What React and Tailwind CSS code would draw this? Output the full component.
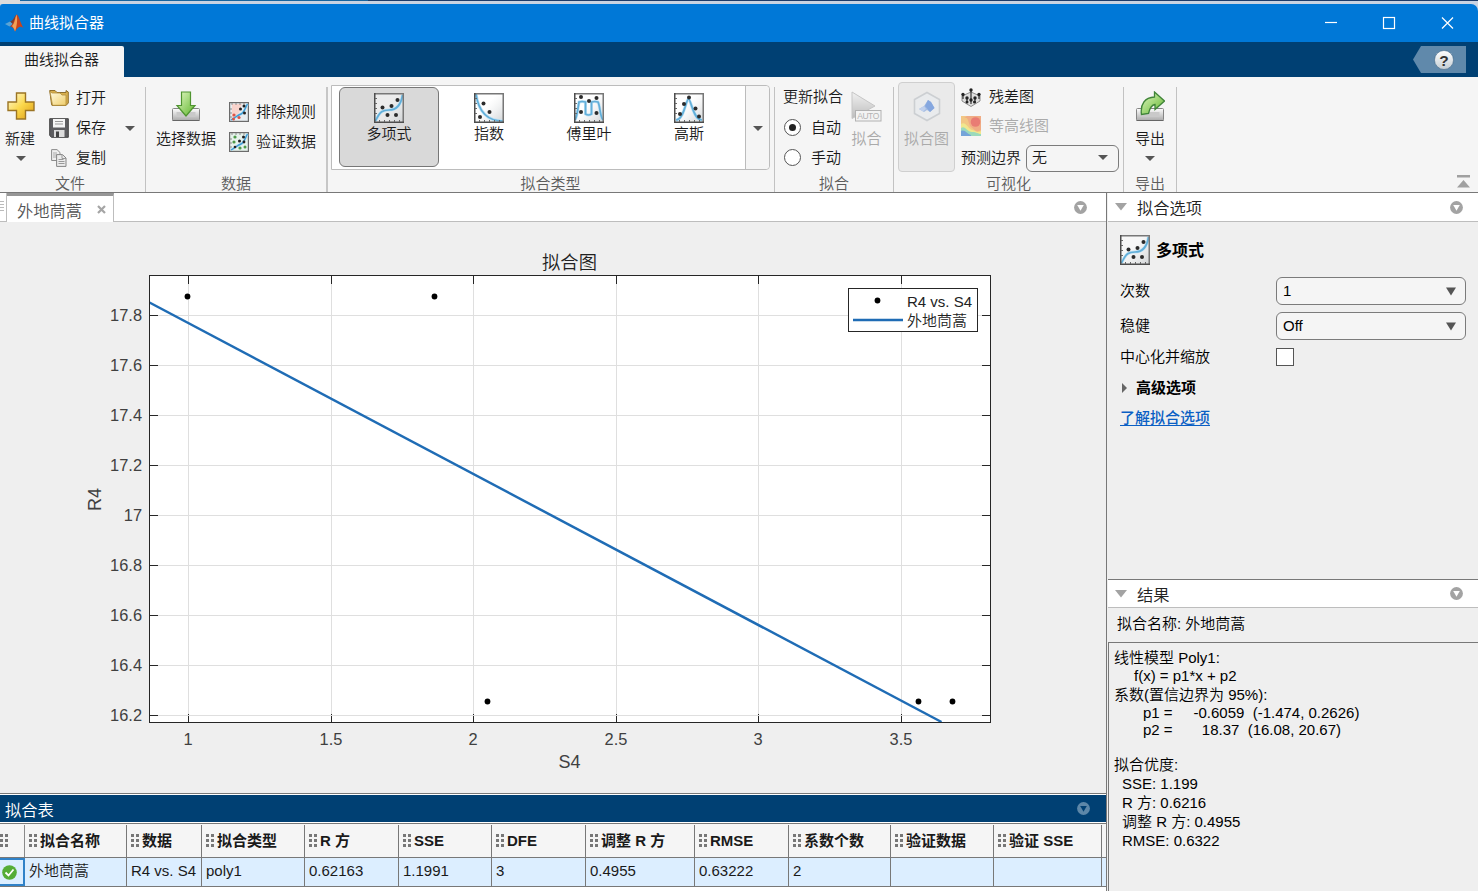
import React from "react";

const Caret = ({ className = "" }) => (
  <svg className={className} width="10" height="5" viewBox="0 0 10 5"><path d="M0 0H10L5 5Z" fill="#555" /></svg>
);

const Triangle = () => (
  <svg width="12" height="8" viewBox="0 0 12 8"><path d="M0 0H12L6 7.5Z" fill="#a3a3a3" /></svg>
);

const PanelMenu = ({ ring = "#a3a3a3", fill = "#fff" }) => (
  <svg width="13" height="13" viewBox="0 0 13 13">
    <circle cx="6.5" cy="6.5" r="6.4" fill={ring} />
    <path d="M3.2 4H9.8L6.5 9.8Z" fill={fill} />
  </svg>
);

const curves = {
  poly: "M1.5 28C6 18 9 17 15 17C22 17 27 12 28.5 2",
  exp: "M2 1C4 15 10 28 29 28",
  fourier: "M1 27C3 24 3.5 18 5 9Q8 8 11.500 9V21Q14.500 23 17.500 21V9Q21 8 24 9C26 12 26 24 29 27",
  gauss: "M2 27C10 27 12 6 14.5 6S19 27 28 27",
};
const points = {
  poly: [[8.5, 14.5], [17.5, 13], [23.5, 7], [13.5, 22], [22, 22]],
  exp: [[9.500, 10.5], [15.5, 19], [6, 24]],
  fourier: [[7, 4], [15, 8], [22.5, 5], [7, 19], [22.5, 20]],
  gauss: [[15, 4.500], [10, 11], [21.5, 15.500], [6, 21], [25, 23.500]],
};

const FitIcon = ({ kind, id }) => (
  <svg width="30" height="30" viewBox="0 0 30 30" className="block shrink-0">
    <defs>
      <linearGradient id={id} x1="0" y1="0" x2="1" y2="1">
        <stop offset=".4" stopColor="#fff" stopOpacity=".5" />
        <stop offset="1" stopColor="#cdd0d2" />
      </linearGradient>
    </defs>
    <rect width="30" height="30" fill={"url(#" + id + ")"} />
    <path d={curves[kind]} fill="none" stroke="#c2e2f4" strokeWidth="3" />
    <path d={curves[kind]} fill="none" stroke="#62afd9" strokeWidth="1.7" />
    <path d="M0 .75H30M29.25 0V30" stroke="#777" strokeWidth="1.500" />
    <path d="M.75 0V29.25H30" fill="none" stroke="#4d4d4d" strokeWidth="1.500" />
    <path d="M1 5.500h2M1 10.500h2M1 15.500h2M1 20.500h2M5.500 29v-2M10.500 29v-2M15.500 29v-2M20.500 29v-2M25.500 29v-2" stroke="#666" />
    {points[kind].map(([x, y]) => <circle key={x + "-" + y} cx={x} cy={y} r="2" fill="#2b2b2b" />)}
  </svg>
);

const RuleIcon = ({ tone }) => {
  const red = tone === "red";
  return (
    <svg width="20" height="20" viewBox="0 0 20 20" className="block shrink-0">
      <rect x=".6" y=".6" width="18.800" height="18.800" fill={red ? "#e8edf0" : "#e6f2ec"} stroke="#6b6b6b" strokeWidth="1.2" />
      {red && <path d="M3 2H13L10 11L6 17H3Z" fill="#f8d3cc" />}
      <path d="M2 18C7 15 9 13 12 12S16 6 18.500 2" fill="none" stroke="#b9def2" strokeWidth="2.600" />
      <path d="M2 18C7 15 9 13 12 12S16 6 18.500 2" fill="none" stroke="#3d9bd3" strokeWidth="1.400" />
      {red ? (
        <g><g fill="#dd5447"><circle cx="5" cy="13" r="1.600" /><circle cx="10" cy="15.500" r="1.600" /><circle cx="4.500" cy="17" r="1.500" /></g>
          <g fill="#222"><circle cx="11.500" cy="7" r="1.500" /><circle cx="15" cy="4" r="1.500" /><circle cx="15.500" cy="11" r="1.500" /></g></g>
      ) : (
        <g><g fill="#4d9a49"><circle cx="5" cy="10" r="1.600" /><circle cx="6" cy="5" r="1.600" /><circle cx="11" cy="16" r="1.600" /><circle cx="16" cy="15" r="1.500" /></g>
          <g fill="#222"><circle cx="10.500" cy="9" r="1.500" /><circle cx="14.500" cy="5" r="1.500" /><circle cx="15" cy="10" r="1.400" /><circle cx="6" cy="15" r="1.300" /></g></g>
      )}
      <path d="M3 1v2M7 1v2M11 1v2M15 1v2M1 7h2M1 11h2M1 15h2" stroke="#777" strokeWidth=".8" />
    </svg>
  );
};

const PlusIcon = () => (
  <svg width="28" height="28" viewBox="0 0 28 28" className="block">
    <defs><linearGradient id="plus" x1="0" y1="0" x2="1" y2="1"><stop stopColor="#fffbe0" /><stop offset=".5" stopColor="#fbd84c" /><stop offset="1" stopColor="#dc9a12" /></linearGradient></defs>
    <path d="M9.500 1H18.500V10H27V18.500H18.500V27H9.500V18.500H1V10H9.500Z" fill="url(#plus)" stroke="#9b7424" strokeWidth="1.400" />
  </svg>
);

const FolderIcon = () => (
  <svg width="20" height="18" viewBox="0 0 20 18" className="block">
    <defs><linearGradient id="folder" x1="0" y1="0" x2="1" y2="1"><stop stopColor="#fffbe2" /><stop offset="1" stopColor="#f0ce6c" /></linearGradient></defs>
    <path d="M.7 1.500H6L8 3.500H17V1.500L19.300 3V14L17 16.500H3L2.500 15Z" fill="#d9b04e" stroke="#8e6e2c" />
    <path d="M1 2.500L3 4H11L13 6H17V16.300H3.500Z" fill="url(#folder)" stroke="#b18d3a" strokeWidth=".8" />
  </svg>
);

const SaveIcon = () => (
  <svg width="20" height="20" viewBox="0 0 20 20" className="block">
    <path d="M.7 .7H19.300V19.300H2.500L.7 17.500Z" fill="#5d5d60" stroke="#444" />
    <rect x="4" y="1" width="12" height="8.500" fill="#f5f5f5" />
    <path d="M6 3.500h8M6 6h8" stroke="#999" />
    <rect x="5" y="12" width="10.500" height="7" fill="#ddd" /><rect x="7" y="13.500" width="3" height="5.500" fill="#444" />
  </svg>
);

const CopyIcon = () => (
  <svg width="16" height="18" viewBox="0 0 16 18" className="block">
    <path d="M.6 .6H6L9 3.500V11.500H.6Z" fill="#efefef" stroke="#8c8c8c" /><path d="M2 4h4M2 6h4M2 8h3" stroke="#aaa" />
    <path d="M5.600 5.600H11.500L15 9V17.400H5.600Z" fill="#ececec" stroke="#858585" /><path d="M11 6v3.500h4M7.500 10.500h5M7.500 12.500h6M7.500 14.500h6" stroke="#999" fill="none" />
  </svg>
);

const Tray = ({ children }) => (
  <svg width="30" height="31" viewBox="0 0 30 31" className="block">
    <defs>
      <linearGradient id="green" x1="0" y1="0" x2="1" y2="1"><stop stopColor="#e2f8c4" /><stop offset="1" stopColor="#5fb52c" /></linearGradient>
      <linearGradient id="tray" x1="0" y1="0" x2="0" y2="1"><stop stopColor="#fff" /><stop offset="1" stopColor="#aaa" /></linearGradient>
    </defs>
    <rect x="1.500" y="17.500" width="27" height="12" rx="1" fill="url(#tray)" stroke="#858585" /><rect x="5.500" y="21" width="19" height="5" fill="#c9c9c9" />
    <path d="M1.500 29.500h27" stroke="#666" />{children}
  </svg>
);

const ImportIcon = () => <Tray><path d="M10.500 1H19.500V14.500H24L15 25L6 14.500H10.500Z" fill="url(#green)" stroke="#4f9430" strokeWidth="1.200" /></Tray>;
const ExportIcon = () => <Tray><path d="M19.500 1L29.500 10L20 18.500V13.500C16 14 14.500 18 13.500 22.500L6.500 23.500C5 13 10 6.500 19.500 6Z" fill="url(#green)" stroke="#3f8438" strokeWidth="1.300" /></Tray>;

const AutoIcon = () => (
  <svg width="31" height="31" viewBox="0 0 31 31" className="block">
    <defs><linearGradient id="play" x1="0" y1="0" x2="0" y2="1"><stop stopColor="#f1f1f1" /><stop offset="1" stopColor="#bcbcbc" /></linearGradient></defs>
    <path d="M1 1L24 15L1 27.500Z" fill="url(#play)" stroke="#c6c6c6" />
    <rect x="4.500" y="19.500" width="25.500" height="10.500" fill="#f3f3f3" stroke="#b2b2b2" />
    <text x="17.300" y="28" textAnchor="middle" fontSize="8.500" fill="#b4b4b4" fontFamily="Liberation Sans, sans-serif" textLength="22">AUTO</text>
  </svg>
);

const HexIcon = () => (
  <svg width="28" height="31" viewBox="0 0 28 31" className="block">
    <path d="M14 1.500L26.500 8.500V22.500L14 29.500L1.500 22.500V8.500Z" fill="#e9ebed" stroke="#cccfd2" strokeWidth="1.600" />
    <path d="M6 18L11 15L15 9L18 11L21.500 17L17 21L14 19L11 21Z" fill="#a5bde2" />
    <path d="M12 15L15 9L18 11L21.500 17L17 21Z" fill="#85a7df" /><path d="M6 18L11 15L13 18L10 20.500Z" fill="#c0d0ec" />
  </svg>
);

const ResidualIcon = () => (
  <svg width="20" height="19" viewBox="0 0 20 19" className="block">
    <path d="M1 8L10 4L19 8V13L10 18.500L1 13Z" fill="#dedede" stroke="#8c8c8c" /><path d="M10 2V12M2 6V11M18 6V11M6 9V15M14 9V15M10 11V16" stroke="#333" strokeWidth="1.200" />
    <g fill="#222"><circle cx="10" cy="2" r="1.700" /><circle cx="2" cy="6.500" r="1.700" /><circle cx="18" cy="6.500" r="1.700" /><circle cx="6" cy="10" r="1.700" /><circle cx="14" cy="10" r="1.700" /><circle cx="10" cy="12" r="1.700" /><circle cx="6" cy="14" r="1.500" /><circle cx="13.500" cy="14" r="1.500" /></g>
  </svg>
);

const ContourIcon = () => (
  <svg width="20" height="20" viewBox="0 0 20 20" className="block opacity-75">
    <rect width="20" height="20" fill="#f2b860" /><path d="M3 2C8 0 7 8 10 11L16 16L20 14V0H6Z" fill="#ef9460" /><circle cx="14.500" cy="6" r="4.800" fill="#e6544a" />
    <path d="M0 8C5 5 7 13 11 14S17 17 20 15V20H0Z" fill="#efe36b" /><path d="M0 12C4 9 6 16 11 16S17 18 20 18V20H0Z" fill="#7ed1aa" /><path d="M0 15C4 13 6 18 10 19V20H0Z" fill="#4a89d0" />
  </svg>
);

const MatlabIcon = () => (
  <svg width="19" height="18" viewBox="0 0 19 18" className="block shrink-0">
    <path d="M0 10L5 7.500L8 10L4.500 12.500Z" fill="#5ba4d4" /><path d="M5 7.500C8 7 9 3 11.500 .5L9 10L6.500 12L8 10Z" fill="#793f34" />
    <path d="M11.500 .5C14 1 15 9 18.500 14C15 11.500 13 13 10 17.500C9 14 7.500 13 5 12.500C9 10 9.500 4 11.500 .5Z" fill="#c8431c" />
    <path d="M11.500 .5C12.800 5 12 12 10 17.500C9.500 15 8 13 7 12C10 9 10 4 11.500 .5Z" fill="#f2a057" />
  </svg>
);

const Section = ({ label, width, children, last = "border-r border-[#c2c2c2]" }) => (
  <div className={"mt-[10px] flex h-[105px] shrink-0 flex-col " + width + " " + last}>
    <div className="-mt-[10px] flex h-[97px] shrink-0">{children}</div>
    <div className="h-[18px] text-center leading-[20px] text-[#5c5c5c]">{label}</div>
  </div>
);

const Tool = ({ icon, label, iconBox = "w-[27px]" }) => (
  <div className="flex h-[30px] items-center">
    <div className={"flex shrink-0 justify-start " + iconBox}>{icon}</div>
    <span className="whitespace-nowrap leading-[20px]">{label}</span>
  </div>
);

const Radio = ({ on, label }) => (
  <div className="flex h-[30px] items-center gap-[10px]">
    <div className="-mt-px flex size-[17px] items-center justify-center rounded-full border border-[#555] bg-white">
      {on && <div className="size-[7px] rounded-full bg-[#222]" />}
    </div>
    <span>{label}</span>
  </div>
);

const xTicks = [["1", 188.5], ["1.5", 331.500], ["2", 473.500], ["2.5", 616.500], ["3", 758.500], ["3.5", 901.500]];
const yTicks = ["17.8", "17.6", "17.4", "17.2", "17", "16.8", "16.6", "16.4", "16.2"];

const Plot = () => (
  <svg width="1106" height="571" viewBox="0 222 1106 571" className="block" fontFamily="'Liberation Sans','Noto Sans CJK SC',sans-serif">
    <rect x="149.500" y="275.500" width="841" height="447" fill="#fff" />
    {xTicks.map(([t, x]) => (
      <g key={t}>
        <path d={`M${x} 276V722`} stroke="#dfdfdf" />
        <path d={`M${x} 276v8M${x} 722v-8`} stroke="#262626" />
        <text x={x - 0.5} y="745" textAnchor="middle" fontSize="16.400" fill="#404040">{t}</text>
      </g>
    ))}
    {yTicks.map((t, i) => (
      <g key={t}>
        <path d={`M150 ${315.5 + i * 50}H990`} stroke="#dfdfdf" />
        <path d={`M150 ${315.5 + i * 50}h8M990 ${315.5 + i * 50}h-8`} stroke="#262626" />
        <text x="142" y={321 + i * 50} textAnchor="end" fontSize="16.400" fill="#404040">{t}</text>
      </g>
    ))}
    <path d="M149.500 302.500L941.500 722" stroke="#1f6cb5" strokeWidth="2.500" />
    <rect x="149.500" y="275.500" width="841" height="447" fill="none" stroke="#262626" />
    {[[187.5, 296.5], [434.5, 296.5], [487.5, 701.5], [918.5, 701.5], [952.5, 701.5]].map(([x, y]) => <circle key={x} cx={x} cy={y} r="2.900" fill="#000" />)}
    <text x="569.500" y="269" textAnchor="middle" fontSize="18.300" fill="#222">拟合图</text>
    <text x="569.500" y="768" textAnchor="middle" fontSize="18" fill="#404040">S4</text>
    <text transform="translate(101 499.500) rotate(-90)" textAnchor="middle" fontSize="18" fill="#404040">R4</text>
    <rect x="848.500" y="288.500" width="129" height="43" fill="#fff" stroke="#262626" />
    <circle cx="877.500" cy="300.500" r="2.900" />
    <path d="M853 320H903" stroke="#1f6cb5" strokeWidth="2.500" />
    <text x="907" y="307" fontSize="15" fill="#222">R4 vs. S4</text>
    <text x="907" y="326" fontSize="15" fill="#222">外地茼蒿</text>
  </svg>
);

const Dots = () => (
  <svg width="8" height="14" viewBox="0 0 8 14" className="block shrink-0"><path d="M0 0h3v3H0zM5 0h3v3H5zM0 5h3v3H0zM5 5h3v3H5zM0 10h3v3H0zM5 10h3v3H5z" fill="#777" /></svg>
);

const columns = [
  ["w-[102px]", "拟合名称", "外地茼蒿"],
  ["w-[75px]", "数据", "R4 vs. S4"],
  ["w-[103px]", "拟合类型", "poly1"],
  ["w-[94px]", "R 方", "0.62163"],
  ["w-[93px]", "SSE", "1.1991"],
  ["w-[94px]", "DFE", "3"],
  ["w-[109px]", "调整 R 方", "0.4955"],
  ["w-[94px]", "RMSE", "0.63222"],
  ["w-[102px]", "系数个数", "2"],
  ["w-[103px]", "验证数据", ""],
  ["w-[108px]", "验证 SSE", ""],
];

const PanelHeader = ({ title, height = "h-[29px]" }) => (
  <div className={"flex shrink-0 items-center border-b border-[#bdbdbd] bg-white pl-[7px] pr-[15px] " + height}>
    <Triangle />
    <span className="ml-[10px] mt-[2px] flex-1 text-[16.300px] leading-[20px] text-[#222]">{title}</span>
    <PanelMenu />
  </div>
);

const Select = ({ value }) => (
  <div className="flex h-[28px] w-[190px] items-center justify-between rounded-[6px] border border-[#7b7b7b] bg-[#f5f5f5] pl-[6px] pr-[9px]">
    <span className="-mt-px">{value}</span>
    <svg width="10" height="9" viewBox="0 0 10 9"><path d="M0 .5H10L5 8.500Z" fill="#555" /></svg>
  </div>
);

const results = [
  ["h-[18px]", "", "线性模型 Poly1:"],
  ["h-[19px]", "pl-[20px]", "f(x) = p1*x + p2"],
  ["h-[18px]", "", "系数(置信边界为 95%):"],
  ["h-[17px]", "pl-[29px]", "p1 =     -0.6059  (-1.474, 0.2626)"],
  ["h-[35px]", "pl-[29px]", "p2 =       18.37  (16.08, 20.67)"],
  ["h-[19px]", "", "拟合优度:"],
  ["h-[19px]", "pl-[8px]", "SSE: 1.199"],
  ["h-[19px]", "pl-[8px]", "R 方: 0.6216"],
  ["h-[19px]", "pl-[8px]", "调整 R 方: 0.4955"],
  ["h-[19px]", "pl-[8px]", "RMSE: 0.6322"],
];

export default function App() {
  return (
    <div className="flex h-[891px] w-[1478px] flex-col overflow-hidden bg-[#efefef] font-['Liberation_Sans','Noto_Sans_CJK_SC',sans-serif] text-[15px] font-[350] leading-[20px] text-[#1a1a1a]">
      <div className="flex h-[4px] shrink-0 bg-[#c9d3e2]"><div className="w-[20px] bg-[#dcdcdc]" /><div className="h-px w-[348px] bg-[#17659f]" /><div className="h-px flex-1 bg-[#1c3c6b]" /></div>
      <div className="shrink-0 bg-[#c9d3e2]">
        <div className="flex h-[38px] items-center rounded-tl-[3px] rounded-tr-[7px] bg-[#0078d7] pl-[5px] text-white">
          <MatlabIcon />
          <span className="ml-[5px] font-normal">曲线拟合器</span>
          <svg className="ml-auto mr-[24px]" width="130" height="14" viewBox="0 0 130 14" fill="none" stroke="#fff" strokeWidth="1.200">
            <path d="M1 6.500H13" /><rect x="59.500" y="1.500" width="11" height="11" /><path d="M118 1.500L129 12.500M129 1.500L118 12.500" />
          </svg>
        </div>
      </div>
      <div className="flex h-[35px] shrink-0 items-end justify-between bg-[#004073] pr-[12px]">
        <div className="flex h-[31px] w-[124px] justify-center rounded-tr-[2px] bg-[#f5f5f5] pt-[4px]"><span className="-ml-px">曲线拟合器</span></div>
        <svg className="mb-[4px]" width="53" height="27" viewBox="0 0 53 27">
          <defs><linearGradient id="help" x1="0" y1="0" x2="0" y2="1"><stop stopColor="#fff" /><stop offset="1" stopColor="#c3cdd4" /></linearGradient></defs>
          <path d="M0 13.500L8 0H53V27H8Z" fill="#6089ab" /><circle cx="31" cy="14" r="9.500" fill="url(#help)" stroke="#416786" strokeWidth=".6" />
          <text x="31" y="19.500" textAnchor="middle" fontSize="15.500" fontWeight="700" fill="#333" fontFamily="Liberation Sans, sans-serif">?</text>
        </svg>
      </div>

      <div className="flex h-[116px] shrink-0 border-b border-[#787878] bg-[#f5f5f5]">
        <Section label={<span className="mr-[5px]">文件</span>} width="w-[146px]">
          <div className="flex w-[42px] flex-col items-center pt-[15px]">
            <PlusIcon /><span className="mt-[9px] -ml-[2px]">新建</span><Caret className="mt-[7px]" />
          </div>
          <div className="ml-[7px] flex flex-col pt-[6px]">
            <Tool icon={<FolderIcon />} label="打开" /><Tool icon={<SaveIcon />} label="保存" /><Tool icon={<div className="pl-[2px]"><CopyIcon /></div>} label="复制" />
          </div>
          <Caret className="ml-[19px] mt-[49px]" />
        </Section>
        <Section label="数据" width="w-[182px]" last="border-r-2 border-[#c6c6c6]">
          <div className="ml-[10px] flex w-[60px] flex-col items-center pt-[14px]"><ImportIcon /><span className="mt-[7px]">选择数据</span></div>
          <div className="ml-[13px] flex flex-col pt-[20px]"><Tool icon={<RuleIcon tone="red" />} label="排除规则" /><Tool icon={<RuleIcon tone="green" />} label="验证数据" /></div>
        </Section>
        <Section label={<span className="-ml-[1px]">拟合类型</span>} width="w-[447px]">
          <div className="ml-[3px] mt-[8px] flex h-[85px] w-[439px] rounded-r-[4px] border border-[#bcbcbc] bg-white">
            <div className="flex flex-1 pl-[7px] pt-px">
              {[["poly", "多项式"], ["exp", "指数"], ["fourier", "傅里叶"], ["gauss", "高斯"]].map(([kind, name]) => (
                <div key={kind} className={"flex h-[80px] w-[100px] flex-col items-center rounded-[6px] border pt-[5px] " + (kind === "poly" ? "border-[#777] bg-[#d9d9d9]" : "border-transparent")}>
                  <FitIcon kind={kind} id={"tool-" + kind} /><span className="mt-px">{name}</span>
                </div>
              ))}
            </div>
            <div className="flex w-[24px] items-center justify-center rounded-r-[4px] border-l border-[#bcbcbc] bg-[#f5f5f5]"><Caret className="mt-px" /></div>
          </div>
        </Section>
        <Section label="拟合" width="w-[119px]">
          <div className="ml-[8px] flex w-[60px] flex-col pt-[10px]"><span>更新拟合</span><div className="pl-[1px] pt-[6px]"><Radio on label="自动" /><Radio label="手动" /></div></div>
          <div className="ml-[8px] flex flex-col items-center pt-[14px] text-[#aaa]"><AutoIcon /><span className="mt-[7px]">拟合</span></div>
        </Section>
        <Section label="可视化" width="w-[230px]">
          <div className="ml-[4px] mt-[5px] flex h-[90px] w-[57px] flex-col items-center rounded-[4px] border border-[#cfcfcf] bg-[#eaeaea] pt-[8px] text-[#aaa]"><HexIcon /><span className="mt-[7px]">拟合图</span></div>
          <div className="ml-[6px] flex flex-col pt-[5px]">
            <Tool icon={<ResidualIcon />} label="残差图" iconBox="w-[28px]" />
            <div className="-mt-px text-[#aaa]"><Tool icon={<ContourIcon />} label="等高线图" iconBox="w-[28px]" /></div>
            <div className="mt-px flex h-[32px] items-center gap-[5px]">
              <span className="w-[60px] whitespace-nowrap">预测边界</span>
              <div className="flex h-[27px] w-[93px] items-center justify-between rounded-[6px] border border-[#7b7b7b] pl-[5px] pr-[10px]"><span>无</span><Caret className="-mt-px" /></div>
            </div>
          </div>
        </Section>
        <Section label="导出" width="w-[53px]">
          <div className="flex w-[52px] flex-col items-center pt-[14px]"><ExportIcon /><span className="mt-[7px]">导出</span><Caret className="mt-[7px]" /></div>
        </Section>
        <svg className="ml-auto mr-[8px] mt-[98px]" width="13" height="13" viewBox="0 0 13 13"><path d="M0 0H13V2.500H0ZM6.500 5L13 12.500H0Z" fill="#a0a0a0" /></svg>
      </div>

      <div className="flex min-h-0 flex-1">
        <div className="flex w-[1107px] shrink-0 flex-col border-r border-[#787878]">
          <div className="flex h-[29px] shrink-0 border-b border-[#bdbdbd] bg-white">
            <div className="flex w-[7px] items-center border-r border-[#bdbdbd]"><svg width="4" height="12" viewBox="0 0 4 12"><path d="M0 .5h4M0 3.500h4M0 6.500h4M0 9.500h4" stroke="#bbb" /></svg></div>
            <div className="flex h-[29px] w-[107px] items-center border-r border-t-[3px] border-r-[#bdbdbd] border-t-[#969696] bg-white pl-[10px] text-[16.300px] text-[#555]">
              <span className="mt-[4px]">外地茼蒿</span>
              <svg className="ml-[15px] mt-px" width="9" height="9" viewBox="0 0 9 9"><path d="M1 1L8 8M8 1L1 8" stroke="#a5a5a5" strokeWidth="2.200" /></svg>
            </div>
            <div className="ml-auto mr-[19px] flex items-center"><PanelMenu /></div>
          </div>
          <Plot />
          <div className="flex min-h-0 flex-1 flex-col border-t border-[#787878] bg-white pt-px">
            <div className="flex h-[27px] shrink-0 items-center justify-between bg-[#004073] pl-[5px] pr-[16px] text-[16.300px] text-white"><span className="mt-[3px]">拟合表</span><PanelMenu ring="#5d87a8" fill="#004073" /></div>
            <div className="mt-px flex h-[35px] shrink-0 border-b border-t border-[#787878] bg-[#f5f5f5] pt-px font-bold">
              <div className="flex w-[25px] items-center border-r border-[#8a8a8a]"><Dots /></div>
              {columns.map(([w, title]) => (
                <div key={title} className={"flex shrink-0 items-center gap-[3px] border-r border-[#787878] pl-[4px] " + w}><Dots /><span className="whitespace-nowrap">{title}</span></div>
              ))}
            </div>
            <div className="flex h-[29px] shrink-0 border-b border-[#787878] bg-[#dceeff]">
              <div className="flex w-[25px] items-center border-2 border-l-0 border-[#3082c8] pl-[2px]">
                <svg width="15" height="15" viewBox="0 0 15 15"><circle cx="7.500" cy="7.500" r="7.300" fill="#55ad37" /><path d="M3.500 7.500L6.500 10.500L11.500 4.500" fill="none" stroke="#fff" strokeWidth="1.800" /></svg>
              </div>
              {columns.map(([w, title, value]) => (
                <div key={title} className={"shrink-0 whitespace-nowrap border-r border-[#787878] pl-[4px] pt-[3px] " + w}>{value}</div>
              ))}
            </div>
          </div>
        </div>

        <div className="ml-px flex flex-1 flex-col">
          <PanelHeader title="拟合选项" />
          <div className="flex h-[357px] shrink-0 flex-col pl-[12px] text-black">
            <div className="mt-[13px] flex h-[30px] items-center gap-[6px] text-[16px] font-bold"><FitIcon kind="poly" id="option-poly" /><span className="mt-px">多项式</span></div>
            <div className="mt-[12px] flex h-[28px] items-center"><span className="w-[156px]">次数</span><Select value="1" /></div>
            <div className="mt-[7px] flex h-[28px] items-center"><span className="w-[156px]">稳健</span><Select value="Off" /></div>
            <div className="mt-[8px] flex h-[18px] items-center"><span className="w-[156px]">中心化并缩放</span><div className="size-[18px] border border-[#555] bg-white" /></div>
            <div className="mt-[12px] flex h-[20px] items-center font-bold"><svg className="ml-[2px] mr-[9px]" width="5" height="10" viewBox="0 0 5 10"><path d="M0 0L5 5L0 10Z" fill="#666" /></svg>高级选项</div>
            <div className="mt-[10px] font-medium text-[#0a5fc4] underline underline-offset-2">了解拟合选项</div>
          </div>
          <div className="shrink-0 border-t border-[#787878]"><PanelHeader title="结果" height="h-[28px]" /></div>
          <div className="h-[34px] shrink-0 pl-[9px] pt-[6px] text-black">拟合名称: 外地茼蒿</div>
          <div className="flex-1 border-l border-t border-[#787878] pl-[5px] pt-[5px] text-black">
            {results.map(([h, pad, text]) => <div key={text} className={"whitespace-pre " + h + " " + pad}>{text}</div>)}
          </div>
        </div>
      </div>
    </div>
  );
}
